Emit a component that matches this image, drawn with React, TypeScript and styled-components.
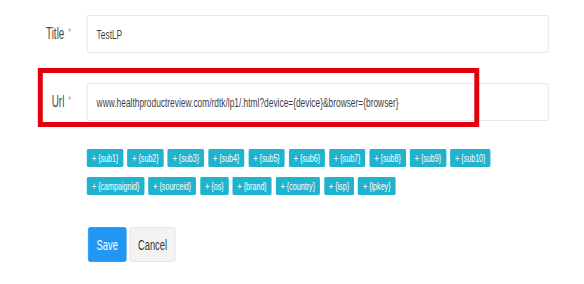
import * as React from "react";
import styled, { createGlobalStyle } from "styled-components";

// The reference capture is squeezed sideways, so the page is laid out at full
// width and scaled horizontally by SQUEEZE. Horizontal sizes go through x().
const SQUEEZE = 0.62;
const x = (px: number) => `${(px / SQUEEZE).toFixed(2)}px`;

const GlobalStyle = createGlobalStyle`
  html, body {
    margin: 0;
    padding: 0;
    background: #ffffff;
    overflow: hidden;
  }
  body {
    font-family: "Liberation Sans", Arial, sans-serif;
    color: #444;
  }
`;

const Stage = styled.div`
  width: ${x(584)};
  height: 284px;
  transform: scaleX(${SQUEEZE});
  transform-origin: 0 0;
`;

const Form = styled.div`
  position: relative;
  padding-top: 15px;
`;

const Row = styled.div<{ $gap?: number }>`
  display: grid;
  grid-template-columns: ${x(71)} ${x(462)};
  column-gap: ${x(16)};
  align-items: center;
  margin-bottom: ${p => p.$gap ?? 0}px;
`;

const Label = styled.label`
  text-align: right;
  font-size: 16px;
  color: #4a4a4a;
`;

const Star = styled.span`
  color: #f07070;
  font-size: 11px;
  margin-left: ${x(4)};
  vertical-align: 3px;
`;

const Input = styled.div`
  height: 38px;
  box-sizing: border-box;
  border-style: solid;
  border-color: #e2e2e2;
  border-width: 1px ${x(1)};
  border-radius: 2px;
  padding: 0 ${x(9)};
  display: flex;
  align-items: center;
  font-size: 13.5px;
  color: #3f3f3f;
  white-space: nowrap;
  overflow: hidden;
`;

const Highlight = styled.div`
  position: absolute;
  left: ${x(38)};
  top: 68px;
  width: ${x(441)};
  height: 59px;
  box-sizing: border-box;
  border-style: solid;
  border-color: #e3000f;
  border-width: 5px ${x(5)};
  pointer-events: none;
`;

const Tags = styled.div`
  margin: 28px 0 0 ${x(87)};
  display: flex;
  flex-direction: column;
  gap: 10px;
`;

const TagRow = styled.div`
  display: flex;
  gap: ${x(4)};
`;

const Tag = styled.span`
  height: 18px;
  padding: 0 ${x(5)};
  display: inline-flex;
  align-items: center;
  background: #1fb3ce;
  color: #ffffff;
  border-radius: 2px;
  font-size: 11.5px;
  white-space: nowrap;
`;

const Actions = styled.div`
  margin: 32px 0 0 ${x(88)};
  display: flex;
  gap: ${x(3)};
`;

const Button = styled.button<{ $primary?: boolean }>`
  height: 35px;
  padding: 0 ${x(8)};
  border-radius: 3px;
  font-family: inherit;
  font-size: 15px;
  border-style: solid;
  border-width: 1px ${x(1)};
  border-color: ${p => (p.$primary ? "#2196f3" : "#e0e0e0")};
  background: ${p => (p.$primary ? "#2196f3" : "#f3f3f3")};
  color: ${p => (p.$primary ? "#ffffff" : "#333")};
`;

const rowOne = ["sub1", "sub2", "sub3", "sub4", "sub5", "sub6", "sub7", "sub8", "sub9", "sub10"];
const rowTwo = ["campaignid", "sourceid", "os", "brand", "country", "isp", "lpkey"];

export default function App() {
  return (
    <Stage>
      <GlobalStyle />
      <Form>
        <Row $gap={30}>
          <Label>
            Title<Star>*</Star>
          </Label>
          <Input>TestLP</Input>
        </Row>
        <Row>
          <Label>
            Url<Star>*</Star>
          </Label>
          <Input>www.healthproductreview.com/rdtk/lp1/.html?device={"{device}"}&amp;browser={"{browser}"}</Input>
        </Row>
        <Highlight />
        <Tags>
          {[rowOne, rowTwo].map((row, i) => (
            <TagRow key={i}>
              {row.map(t => (
                <Tag key={t}>+ {`{${t}}`}</Tag>
              ))}
            </TagRow>
          ))}
        </Tags>
        <Actions>
          <Button $primary>Save</Button>
          <Button>Cancel</Button>
        </Actions>
      </Form>
    </Stage>
  );
}
